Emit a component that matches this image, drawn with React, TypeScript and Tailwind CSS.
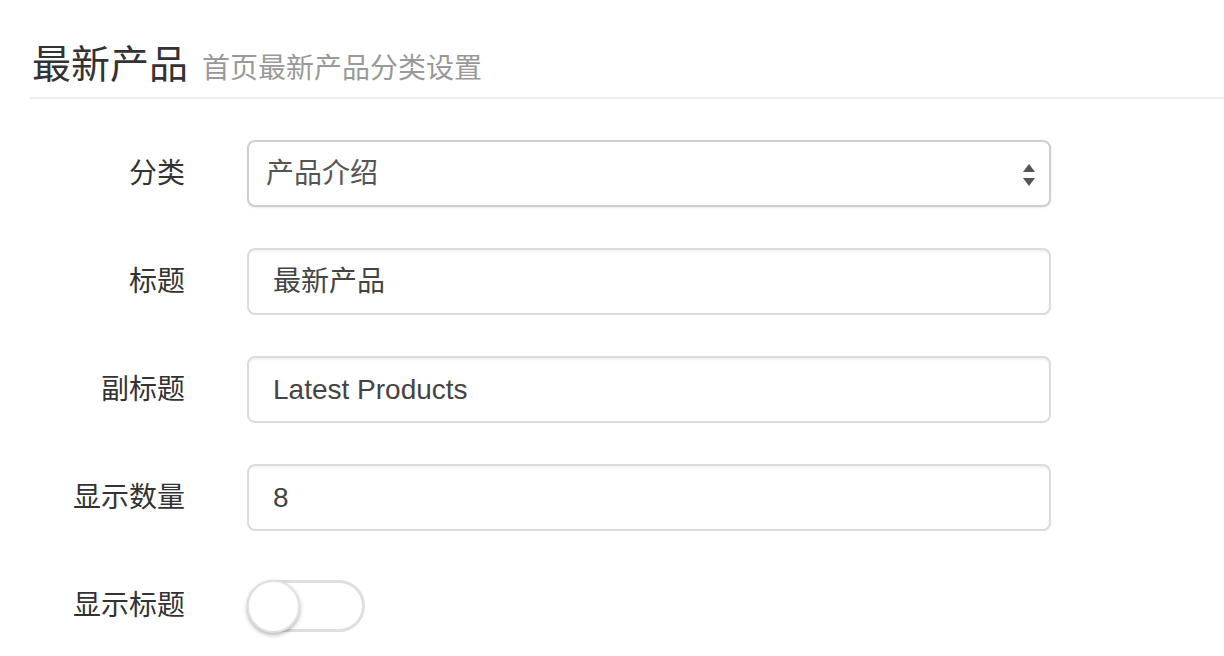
import React from "react";

const font = { fontFamily: '"Liberation Sans", "Noto Sans CJK SC", sans-serif' };

function Label({ text }: { text: string }) {
  return (
    <div className="w-[186px] shrink-0 pr-[31px] text-right text-[28px] leading-[40px] text-[#333]">
      {text}
    </div>
  );
}

function TextInput({ value }: { value: string }) {
  return (
    <div className="ml-[31px] flex h-[67px] w-[804px] items-center rounded-[8px] border-2 border-[#dcdcdc] bg-white pl-[24px] text-[28px] text-[#444] shadow-[inset_0_2px_2px_rgba(0,0,0,0.06)]">
      {value}
    </div>
  );
}

export default function App() {
  return (
    <div className="min-h-screen bg-white pl-[30px]" style={font}>
      <div className="flex items-baseline gap-[14px] border-b-2 border-[#eee] pb-[6px] pl-[2px] pt-[43px]">
        <span className="text-[39px] leading-[44px] text-[#333]">最新产品</span>
        <span className="text-[28px] leading-[44px] text-[#999]">首页最新产品分类设置</span>
      </div>

      <div className="mt-[41px] flex flex-col gap-[41px]">
        <div className="flex h-[67px] items-center">
          <Label text="分类" />
          <div className="relative ml-[31px] flex h-[67px] w-[804px] items-center rounded-[8px] border-2 border-[#cfcfcf] bg-white pl-[17px] text-[28px] text-[#555] shadow-[0_1px_2px_rgba(0,0,0,0.08)]">
            产品介绍
            <svg className="absolute right-[14px] top-[22px]" width="12" height="23" viewBox="0 0 12 23">
              <polygon points="6,0 12,8 0,8" fill="#555" />
              <polygon points="0,14 12,14 6,22" fill="#555" />
            </svg>
          </div>
        </div>

        <div className="flex h-[67px] items-center">
          <Label text="标题" />
          <TextInput value="最新产品" />
        </div>

        <div className="flex h-[67px] items-center">
          <Label text="副标题" />
          <TextInput value="Latest Products" />
        </div>

        <div className="flex h-[67px] items-center">
          <Label text="显示数量" />
          <TextInput value="8" />
        </div>

        <div className="flex h-[67px] items-center">
          <Label text="显示标题" />
          <div className="relative ml-[31px] h-[52px] w-[118px] rounded-full border-[3px] border-[#dfdfdf] bg-white">
            <div className="absolute left-[-3px] top-[-3px] h-[53px] w-[53px] rounded-full border-2 border-[#e2e2e2] bg-white shadow-[0_2px_4px_rgba(0,0,0,0.3)]" />
          </div>
        </div>
      </div>
    </div>
  );
}
